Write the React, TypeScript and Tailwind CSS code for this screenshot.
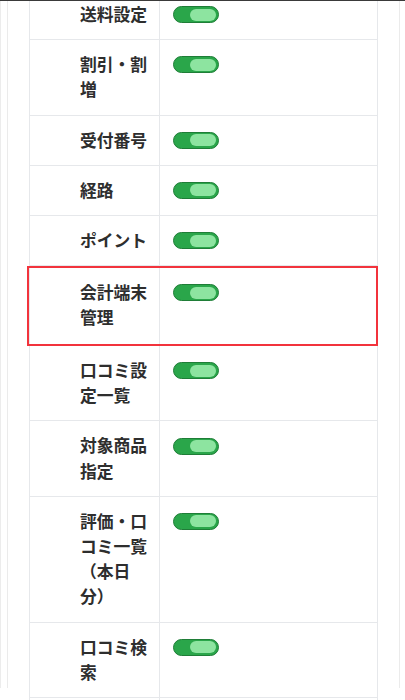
import React from "react";

type Row = { label: string; highlight?: boolean };

const rows: Row[] = [
  { label: "送料設定" },
  { label: "割引・割増" },
  { label: "受付番号" },
  { label: "経路" },
  { label: "ポイント" },
  { label: "会計端末管理", highlight: true },
  { label: "口コミ設定一覧" },
  { label: "対象商品指定" },
  { label: "評価・口コミ一覧（本日分）" },
  { label: "口コミ検索" },
  { label: "" },
];

function Toggle() {
  return (
    <div className="flex h-[25.2px] items-center">
      <div className="flex h-[17px] w-[46px] items-center justify-end rounded-full border border-[#1f7d37] bg-[#2aa64a] pr-[2px]">
        <div className="h-[12px] w-[26px] rounded-full bg-[#8de4a0]" />
      </div>
    </div>
  );
}

export default function App() {
  return (
    <div className="h-[700px] overflow-hidden border-t border-[#3a3a3a] bg-white font-['Noto_Sans_CJK_JP','Noto_Sans',sans-serif]">
      <div className="h-full border-l border-[#ececec] pl-[6px]">
        <div className="mr-[5px] h-full border-x border-[#ebebeb] px-[21px]">
          <div className="-mt-[12px] border-x border-t border-[#e6e8eb]">
            {rows.map((r, i) => (
              <div
                key={i}
                className={
                  r.highlight
                    ? "relative flex border-b border-[#e6e8eb]"
                    : "flex border-b border-[#e6e8eb]"
                }
              >
                <div
                  className={
                    r.highlight
                      ? "w-[130px] shrink-0 border-r border-[#e6e8eb] pb-[14.4px] pl-[50px] pr-[8px] pt-[14px] text-[16.8px] font-bold leading-[25.2px] text-[#2e2e2e]"
                      : "min-h-[49.2px] w-[130px] shrink-0 border-r border-[#e6e8eb] py-[12px] pl-[50px] pr-[8px] text-[16.8px] font-bold leading-[25.2px] text-[#2e2e2e]"
                  }
                >
                  {r.label}
                </div>
                <div
                  className={
                    r.highlight
                      ? "flex-1 pl-[13px] pt-[14px]"
                      : "flex-1 pl-[13px] pt-[12px]"
                  }
                >
                  {r.label && <Toggle />}
                </div>
                {r.highlight && (
                  <div className="pointer-events-none absolute -bottom-[1px] -left-[3px] -right-[1px] top-0 border-2 border-[#f2333c]" />
                )}
              </div>
            ))}
          </div>
        </div>
      </div>
    </div>
  );
}
